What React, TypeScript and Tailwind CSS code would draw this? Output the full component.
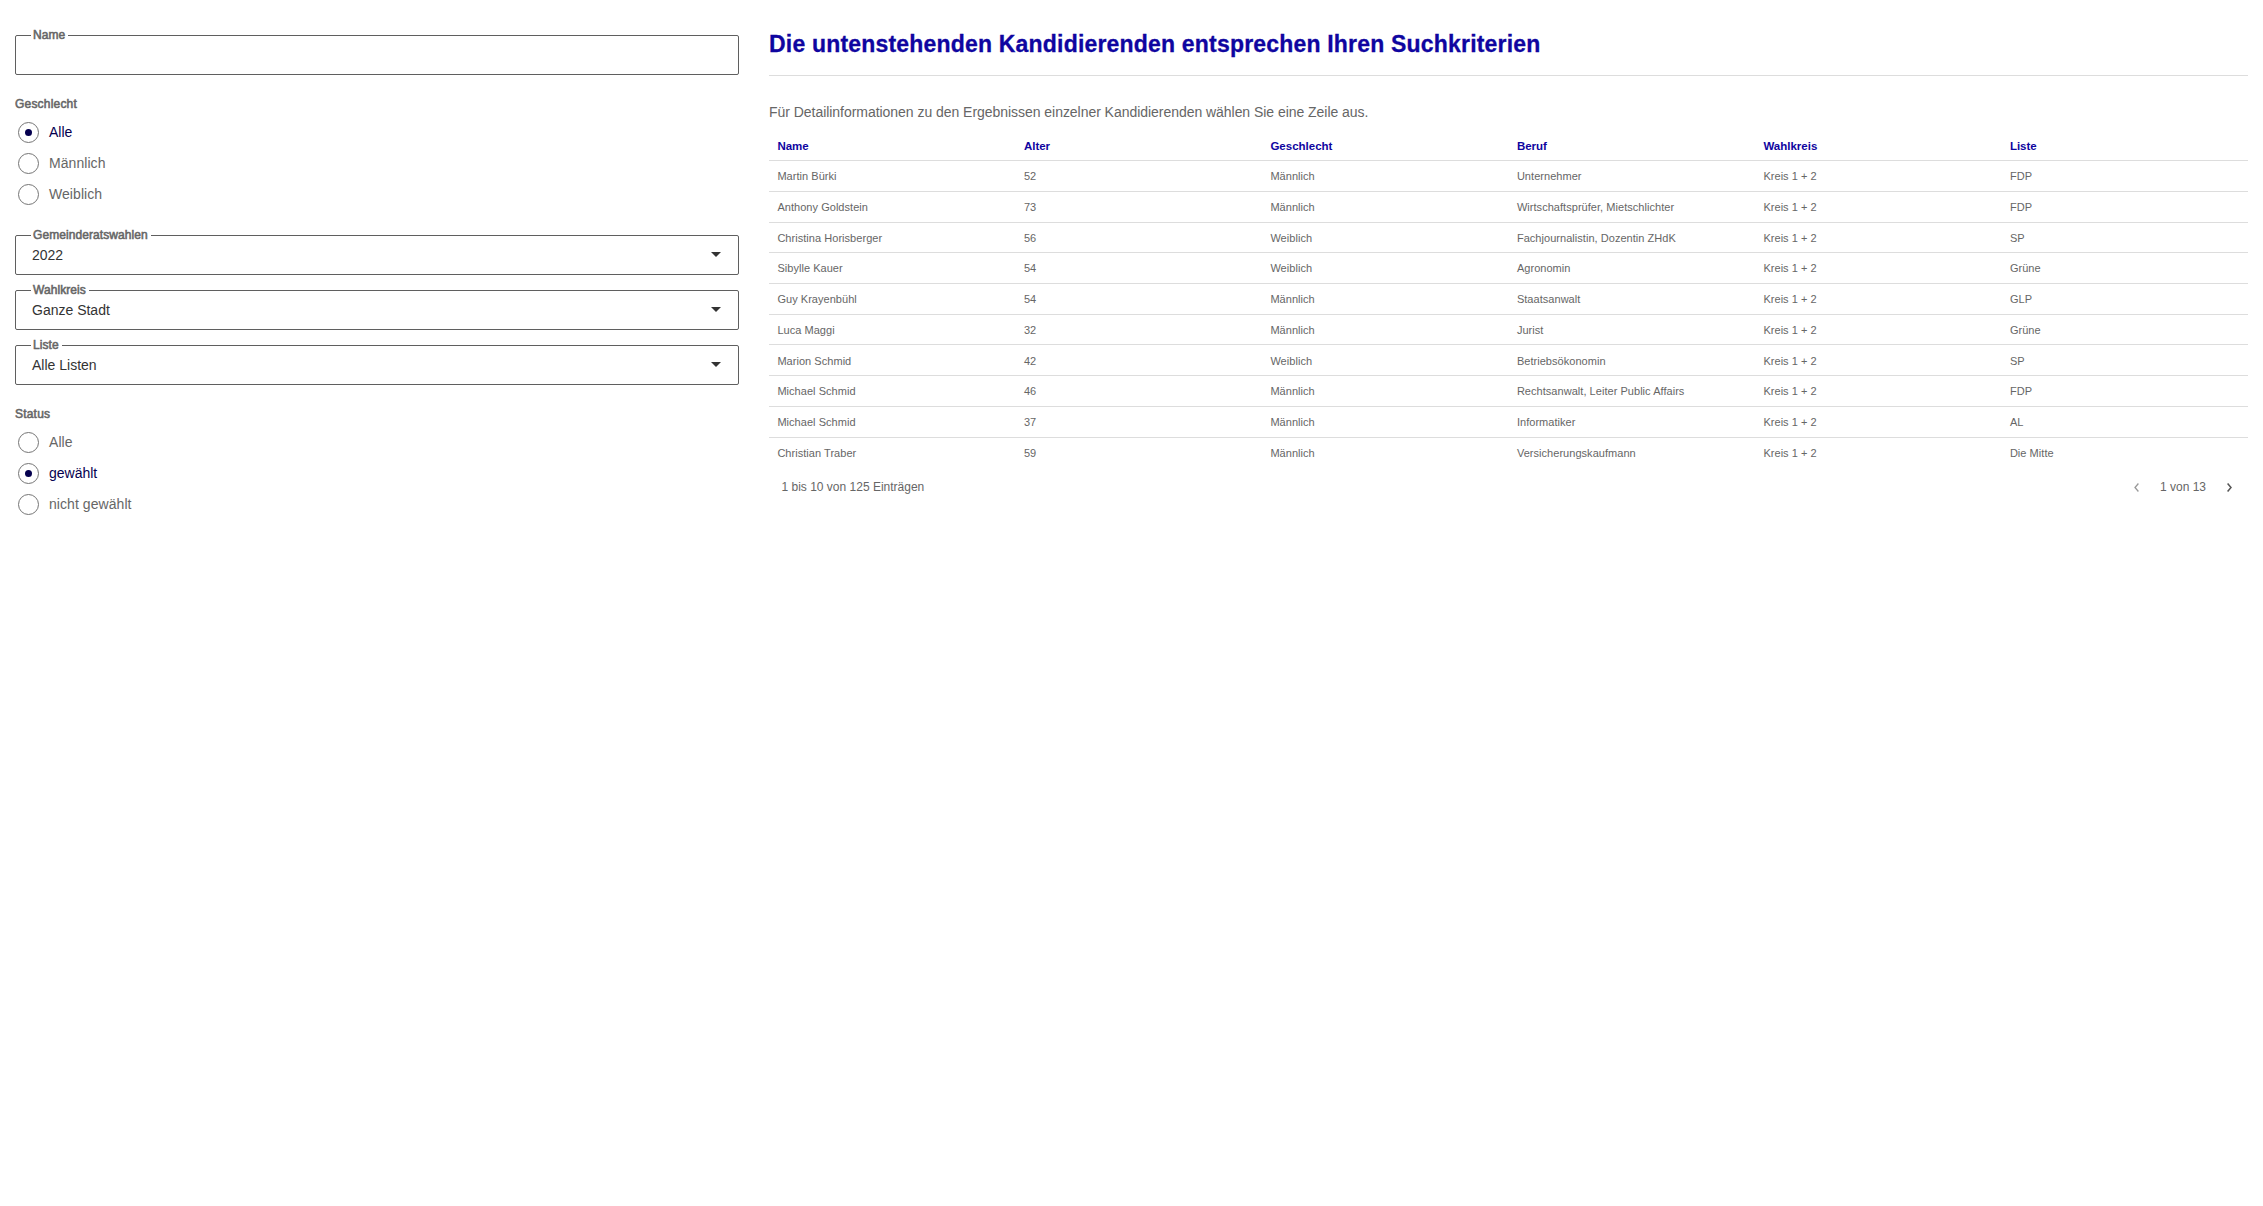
const columns = ["Name", "Alter", "Geschlecht", "Beruf", "Wahlkreis", "Liste"];

const rows = [
  ["Martin Bürki", "52", "Männlich", "Unternehmer", "Kreis 1 + 2", "FDP"],
  ["Anthony Goldstein", "73", "Männlich", "Wirtschaftsprüfer, Mietschlichter", "Kreis 1 + 2", "FDP"],
  ["Christina Horisberger", "56", "Weiblich", "Fachjournalistin, Dozentin ZHdK", "Kreis 1 + 2", "SP"],
  ["Sibylle Kauer", "54", "Weiblich", "Agronomin", "Kreis 1 + 2", "Grüne"],
  ["Guy Krayenbühl", "54", "Männlich", "Staatsanwalt", "Kreis 1 + 2", "GLP"],
  ["Luca Maggi", "32", "Männlich", "Jurist", "Kreis 1 + 2", "Grüne"],
  ["Marion Schmid", "42", "Weiblich", "Betriebsökonomin", "Kreis 1 + 2", "SP"],
  ["Michael Schmid", "46", "Männlich", "Rechtsanwalt, Leiter Public Affairs", "Kreis 1 + 2", "FDP"],
  ["Michael Schmid", "37", "Männlich", "Informatiker", "Kreis 1 + 2", "AL"],
  ["Christian Traber", "59", "Männlich", "Versicherungskaufmann", "Kreis 1 + 2", "Die Mitte"],
];

function Field({ label, value }: { label: string; value?: string }) {
  return (
    <div className="relative flex h-10 items-center justify-between rounded-[2px] border border-[#5f5f5f] pl-4 pr-[17px]">
      <span className="absolute -top-[9px] left-[15px] bg-white pl-0.5 pr-[3px] text-xs leading-4 tracking-[0.08px] text-[#666] [-webkit-text-stroke:0.55px_#666]">
        {label}
      </span>
      {value && (
        <>
          <span className="text-sm leading-5 text-[#333]">{value}</span>
          <svg width="10" height="5" viewBox="0 0 10 5" className="mb-px">
            <path d="M0 0h10L5 5z" fill="#333" />
          </svg>
        </>
      )}
    </div>
  );
}

function RadioGroup({ label, options, selected }: { label: string; options: string[]; selected: string }) {
  return (
    <div>
      <div className="text-xs leading-4 tracking-[0.2px] text-[#666] [-webkit-text-stroke:0.55px_#666]">{label}</div>
      <div className="mt-[5px] flex flex-col pl-[3px]">
        {options.map((option) => (
          <label key={option} className="flex h-[31px] items-center gap-2.5">
            <span className="flex size-[21px] items-center justify-center rounded-full border border-[#757575]">
              {option === selected && <span className="size-[7px] rounded-full bg-[#05004f]" />}
            </span>
            <span className={option === selected ? "pb-0.5 text-sm leading-5 text-[#05004f]" : "pb-0.5 text-sm leading-5 tracking-[0.06px] text-[#666]"}>
              {option}
            </span>
          </label>
        ))}
      </div>
    </div>
  );
}

export default function App() {
  return (
    <div className="flex min-h-screen gap-[30px] bg-white pl-[15px] pr-[15px] font-['Liberation_Sans',Arial,sans-serif]">
      <aside className="w-[724px] pt-[35px]">
        <Field label="Name" />
        <div className="mt-[21px]">
          <RadioGroup label="Geschlecht" options={["Alle", "Männlich", "Weiblich"]} selected="Alle" />
        </div>
        <div className="mt-[25px] flex flex-col gap-[15px]">
          <Field label="Gemeinderatswahlen" value="2022" />
          <Field label="Wahlkreis" value="Ganze Stadt" />
          <Field label="Liste" value="Alle Listen" />
        </div>
        <div className="mt-[21px]">
          <RadioGroup label="Status" options={["Alle", "gewählt", "nicht gewählt"]} selected="gewählt" />
        </div>
      </aside>

      <main className="min-w-0 flex-1 pt-[29px]">
        <h1 className="text-[23px] font-bold leading-[30px] tracking-[0.19px] text-[#0f05a0] [-webkit-text-stroke:0.3px_#0f05a0]">
          Die untenstehenden Kandidierenden entsprechen Ihren Suchkriterien
        </h1>
        <hr className="mt-4 border-0 border-t border-[#ddd]" />
        <p className="mt-[26px] text-sm leading-5 tracking-[-0.04px] text-[#666]">
          Für Detailinformationen zu den Ergebnissen einzelner Kandidierenden wählen Sie eine Zeile aus.
        </p>
        <div className="mt-[9.125px] text-[11px] text-[#666]">
          <div className="grid h-[30px] grid-cols-6 items-center border-b border-[#ddd] pt-[1.5px] text-[11.5px] font-bold text-[#0f05a0]">
            {columns.map((column) => (
              <span key={column} className="pl-[8.4px]">{column}</span>
            ))}
          </div>
          {rows.map((row, index) => (
            <div key={index} className="grid h-[30.72px] grid-cols-6 items-center border-b border-[#ddd] pt-[1.1px] tracking-[0.04px] last:border-transparent">
              {row.map((cell, cellIndex) => (
                <span key={cellIndex} className="whitespace-nowrap pl-[8.4px]">{cell}</span>
              ))}
            </div>
          ))}
        </div>
        <div className="mt-[9px] flex items-center justify-between pl-[12.5px] pr-4 text-xs leading-5 text-[#666]">
          <span>1 bis 10 von 125 Einträgen</span>
          <div className="flex items-center">
            <svg width="5" height="9" viewBox="0 0 5 9" fill="none" stroke="#999" strokeWidth="1.3">
              <path d="M4.4 .5L1 4.5l3.4 4" />
            </svg>
            <span className="ml-[21px] mr-[21px]">1 von 13</span>
            <svg width="5" height="9" viewBox="0 0 5 9" fill="none" stroke="#555" strokeWidth="1.5">
              <path d="M.6 .5L4 4.5l-3.4 4" />
            </svg>
          </div>
        </div>
      </main>
    </div>
  );
}
